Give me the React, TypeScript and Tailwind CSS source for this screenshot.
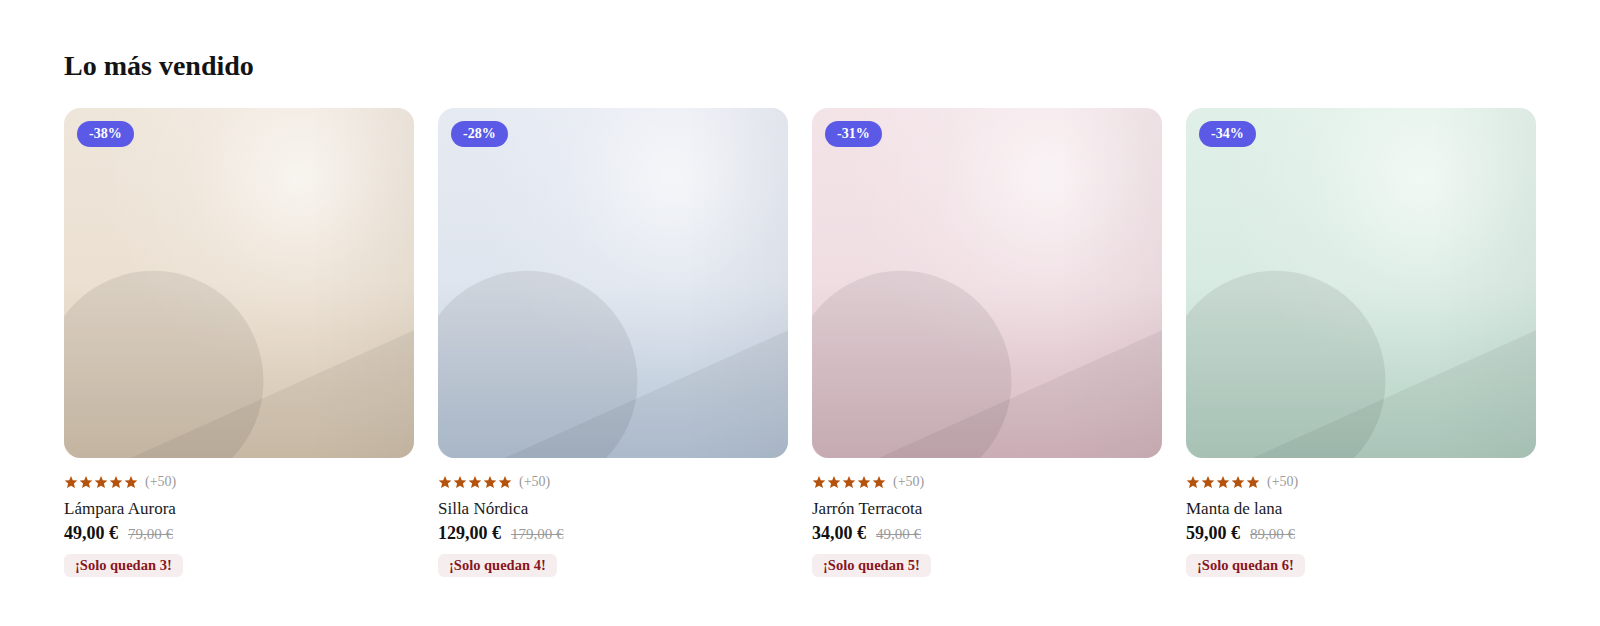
const products = [
  {
    name: "Lámpara Aurora",
    price: "49,00 €",
    oldPrice: "79,00 €",
    discount: "-38%",
    stock: 3,
    bg: "bg-linear-to-b from-[#efe6db] via-[#ebe0d1] to-[#d3c3ae]",
  },
  {
    name: "Silla Nórdica",
    price: "129,00 €",
    oldPrice: "179,00 €",
    discount: "-28%",
    stock: 4,
    bg: "bg-linear-to-b from-[#e6eaf2] via-[#dfe5ee] to-[#b6c5d7]",
  },
  {
    name: "Jarrón Terracota",
    price: "34,00 €",
    oldPrice: "49,00 €",
    discount: "-31%",
    stock: 5,
    bg: "bg-linear-to-b from-[#f3e4e8] via-[#efdde2] to-[#d6b8c0]",
  },
  {
    name: "Manta de lana",
    price: "59,00 €",
    oldPrice: "89,00 €",
    discount: "-34%",
    stock: 6,
    bg: "bg-linear-to-b from-[#e0f0e8] via-[#d8ebe2] to-[#b4d1c3]",
  },
];

const Star = () => (
  <svg viewBox="0 0 24 24" className="w-[14px] h-[14px] fill-[#b4530e]">
    <path d="M12 1.8l3.1 7.1 7.7.7-5.8 5.1 1.8 7.6L12 18.3l-6.8 4 1.8-7.6-5.8-5.1 7.7-.7z" />
  </svg>
);

const ProductCard = ({ product }: { product: (typeof products)[number] }) => (
  <div className="flex flex-col">
    <div className={`relative aspect-square rounded-2xl overflow-hidden ${product.bg}`}>
      <div className="absolute inset-0 bg-[radial-gradient(circle_at_67%_20%,rgba(255,255,255,0.6),rgba(255,255,255,0.15)_30%,rgba(255,255,255,0)_55%)]" />
      <div className="absolute inset-0 bg-linear-to-r from-[rgba(0,0,0,0)] from-70% to-[rgba(0,0,0,0.03)]" />
      <svg viewBox="0 0 100 100" preserveAspectRatio="none" className="absolute inset-0 w-full h-full">
        <circle cx="25.5" cy="78" r="31.5" fill="#000" fillOpacity="0.075" />
        <polygon points="19,100 100,63.5 100,100" fill="#000" fillOpacity="0.055" />
      </svg>
      <span className="absolute top-[13px] left-[13px] bg-[#5a5ae6] text-white text-sm font-bold leading-5 px-3 py-[3px] rounded-full">
        {product.discount}
      </span>
    </div>
    <div className="flex items-center gap-[7px] mt-[14px] h-5">
      <div className="flex gap-[1px]">
        <Star />
        <Star />
        <Star />
        <Star />
        <Star />
      </div>
      <span className="text-sm text-[#9a9a9a]">(+50)</span>
    </div>
    <p className="mt-[7px] text-[17px] leading-5 text-[#1a1a1a]">{product.name}</p>
    <div className="flex items-baseline gap-[10px] leading-6">
      <span className="text-lg font-bold text-[#111]">{product.price}</span>
      <span className="text-[15px] text-[#9a9a9a] line-through">{product.oldPrice}</span>
    </div>
    <div className="flex mt-[7px]">
      <span className="flex items-center h-[23px] px-[11px] rounded-md bg-[#f6eeee] text-[#86161f] text-[14.5px] font-bold">
        ¡Solo quedan {product.stock}!
      </span>
    </div>
  </div>
);

export default function App() {
  return (
    <section className="min-h-[626px] bg-white px-16 pt-12 font-['Liberation_Serif',serif]">
      <h2 className="text-[28px] leading-9 font-bold text-[#141414] mb-6">Lo más vendido</h2>
      <div className="grid grid-cols-4 gap-6">
        {products.map((product) => (
          <ProductCard key={product.name} product={product} />
        ))}
      </div>
    </section>
  );
}
